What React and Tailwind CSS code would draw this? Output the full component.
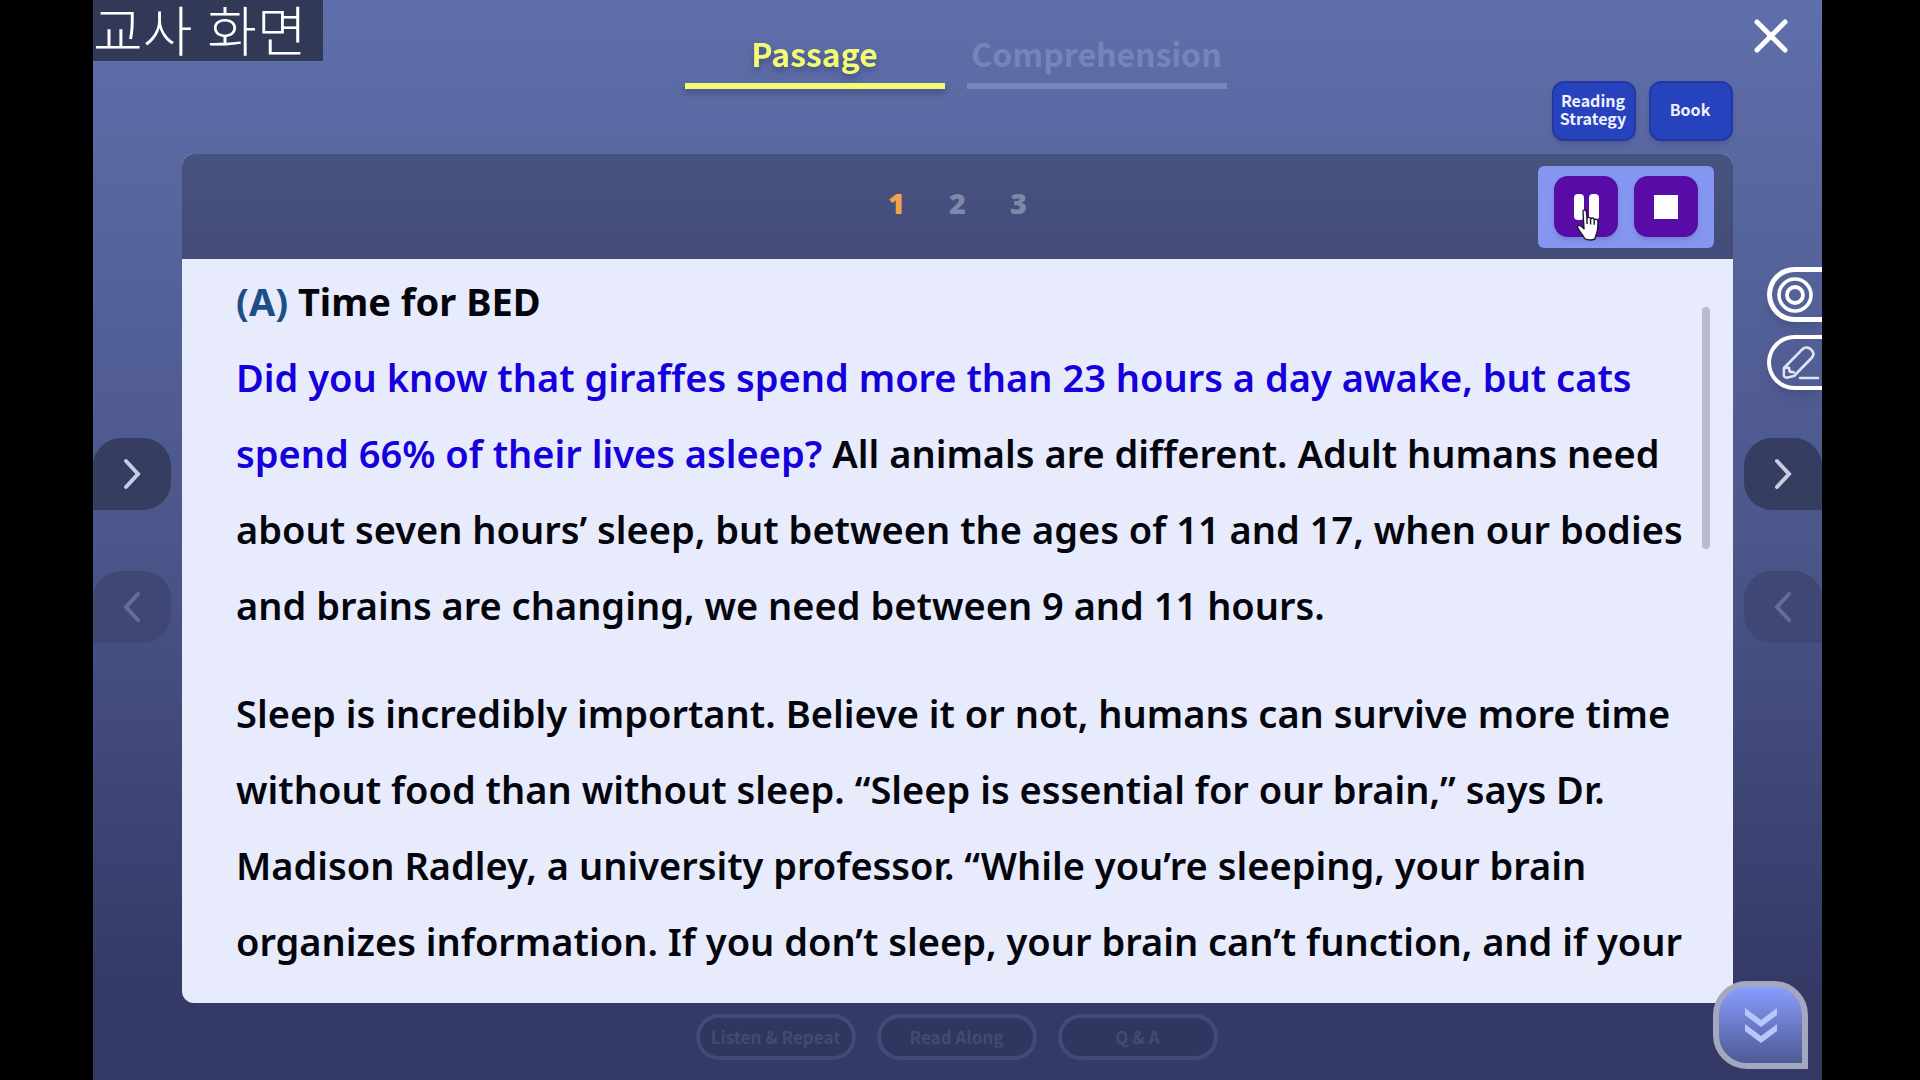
import React from "react";

const tabs = [
  { label: "Passage", active: true },
  { label: "Comprehension", active: false },
];

const activities = ["Listen & Repeat", "Read Along", "Q & A"];

function Chevron({ back }) {
  return (
    <svg viewBox="0 0 20 32" className="h-8 w-5" fill="none" stroke="currentColor" strokeWidth="4" strokeLinecap="round" strokeLinejoin="miter" aria-hidden="true">
      <path d={back ? "M16 3 L4 16 L16 29" : "M4 3 L16 16 L4 29"} />
    </svg>
  );
}

function SideButtons({ corner }) {
  return (
    <>
      <button aria-label="Next page" className={"flex h-[72px] w-[78px] items-center justify-center rounded-[28px] bg-[#353d61] text-[#c9cde0] " + corner}>
        <Chevron />
      </button>
      <button aria-label="Previous page" className={"mt-[61px] flex h-[72px] w-[78px] items-center justify-center rounded-[28px] bg-[#3f4774] text-[#666d97] " + corner}>
        <Chevron back />
      </button>
    </>
  );
}

function Header() {
  return (
    <header className="grid shrink-0 grid-cols-[1fr_auto_1fr]">
      <div />
      <nav className="flex gap-[22px] pt-7 pr-1">
        {tabs.map((t) => (
          <a
            key={t.label}
            href="#"
            className={
              "flex h-[61px] w-[260px] justify-center border-b-6 text-[32px] leading-[50px] font-bold " +
              (t.active
                ? "border-[#f1fb74] text-[#f1fb74] drop-shadow-[0_4px_3px_rgba(40,50,90,0.5)]"
                : "border-[#7a85b8] text-[#7884b8]")
            }
          >
            {t.label}
          </a>
        ))}
      </nav>
      <div className="flex flex-col items-end pt-[19px]">
        <button aria-label="Close" className="mr-[34px] text-white">
          <svg viewBox="0 0 34 34" className="block size-[34px]" stroke="currentColor" strokeWidth="5" strokeLinecap="round" aria-hidden="true">
            <path d="M3 3 L31 31 M31 3 L3 31" />
          </svg>
        </button>
        <div className="mt-7 mr-[89px] mb-[13px] flex gap-[13px] text-[16px] leading-[18px] font-bold text-[#eef1ff]">
          <button className="h-[60px] w-[84px] rounded-xl border-2 border-[#2438a4] bg-[#2742bd] pr-0.5 pb-1 shadow-md">
            Reading
            <br />
            Strategy
          </button>
          <button className="h-[60px] w-[84px] rounded-xl border-2 border-[#2438a4] bg-[#2742bd] pr-0.5 pb-1 shadow-md">Book</button>
        </div>
      </div>
    </header>
  );
}

function PlayerControls() {
  return (
    <div className="relative mr-[19px] flex h-[82px] items-center gap-4 justify-self-end rounded-md bg-[#8496ef] px-4">
      <button aria-label="Pause" className="flex h-[61px] w-16 items-center justify-center gap-[5px] rounded-[14px] bg-[#580ba6] shadow-md">
        <span className="h-[26px] w-[10px] rounded-sm bg-white" />
        <span className="h-[26px] w-[10px] rounded-sm bg-white" />
      </button>
      <button aria-label="Stop" className="flex h-[61px] w-16 items-center justify-center rounded-[14px] bg-[#580ba6] shadow-md">
        <span className="size-6 bg-white" />
      </button>
      <svg viewBox="0 0 24 32" className="absolute top-[43px] left-[38px] h-8 w-6" fill="#fff" stroke="#1c1c2c" strokeWidth="1.4" strokeLinejoin="round" aria-hidden="true">
        <path d="M7 2.6 C7 .4 10.2 .4 10.4 2.6 L11 9.6 C11.6 7.8 14.4 8 14.6 10 C15.4 8.4 18 8.8 18.2 10.8 C19.4 9.6 22 10.4 22 12.6 L21.6 20 C21.5 24 19.5 25.5 19 30 C15 31.5 11.5 31.2 8.5 29.5 C7.5 26 3 22.5 1.6 18.6 C1 16.6 3.2 15.6 4.8 17 L8 19.8 Z" />
        <path d="M11 9.6 V15 M14.6 10 V15.4 M18.2 10.8 V15.8" fill="none" />
      </svg>
    </div>
  );
}

function PassageCard() {
  return (
    <main className="flex min-w-0 flex-1 flex-col overflow-hidden rounded-xl bg-[#e7ebfb]">
      <div className="grid h-[105px] shrink-0 grid-cols-[1fr_auto_1fr] items-center bg-linear-to-b from-[#47537f] to-[#444c79]">
        <div />
        <div className="flex pb-2 font-['Open_Sans',sans-serif] text-[29px] leading-9 font-extrabold text-[#7f88a8]">
          <button className="w-[61px] text-[#f2a24f]">1</button>
          <button className="w-[61px]">2</button>
          <button className="w-[61px]">3</button>
        </div>
        <PlayerControls />
      </div>
      <div className="relative min-h-0 flex-1 overflow-hidden pr-10 pl-[54px] font-['Noto_Sans',sans-serif] text-[38px] leading-[76px] font-semibold text-[#05060d]">
        <article className="pt-1">
          <h1 className="font-bold">
            <span className="text-[#1c4f86]">(A)</span> Time for BED
          </h1>
          <p>
            <span className="text-[#1500dc]">
              Did you know that giraffes spend more than 23 hours a day awake, but cats
              <br />
              spend 66% of their lives asleep?
            </span>{" "}
            All animals are different. Adult humans need
            <br />
            about seven hours’ sleep, but between the ages of 11 and 17, when our bodies
            <br />
            and brains are changing, we need between 9 and 11 hours.
          </p>
          <p className="mt-8">
            Sleep is incredibly important. Believe it or not, humans can survive more time
            <br />
            without food than without sleep. “Sleep is essential for our brain,” says Dr.
            <br />
            Madison Radley, a university professor. “While you’re sleeping, your brain
            <br />
            organizes information. If you don’t sleep, your brain can’t function, and if your
          </p>
        </article>
        <div className="absolute top-12 right-[23px] h-[242px] w-2 rounded-full bg-[#b8bccf]" />
      </div>
    </main>
  );
}

function ToolTabs() {
  return (
    <div className="mt-[113px] mb-12 flex flex-col items-end gap-[13px] text-white">
      <button aria-label="Focus" className="flex h-[55px] w-[55px] items-center rounded-l-full border-5 border-r-0 border-white pl-[5px] shadow-lg">
        <svg viewBox="0 0 36 36" className="size-9" fill="none" stroke="currentColor" aria-hidden="true">
          <circle cx="18" cy="18" r="16" strokeWidth="3.6" />
          <circle cx="18" cy="18" r="8" strokeWidth="3.8" />
        </svg>
      </button>
      <button aria-label="Draw" className="flex h-[55px] w-[55px] items-center rounded-l-full border-4 border-r-0 border-white pl-[11px] shadow-lg">
        <svg viewBox="0 0 38 34" className="h-[34px] w-[38px]" fill="none" stroke="#dfe3f6" strokeWidth="2.6" strokeLinecap="round" strokeLinejoin="round" aria-hidden="true">
          <path d="M2 22 L20.5 3.2 C23 .8 26.4 1 29 3.4 C32 6.2 32 9.4 29.6 12 L12 30 L5.5 31.5 C3 32 1.5 30.5 1.8 28 Z" />
          <path d="M2.6 21.6 L7 21.8 L7.6 25.6 L11.8 26.2" />
          <path d="M18 32 H36" />
        </svg>
      </button>
    </div>
  );
}

export default function App() {
  return (
    <div className="h-screen bg-black pr-[98px] pl-[93px] font-['Noto_Sans_CJK_KR',sans-serif]">
      <div className="relative flex h-full flex-col overflow-hidden bg-linear-to-b from-[#5f6fab] via-[#4b568a] via-50% to-[#343966] to-92%">
        <Header />
        <div className="flex min-h-0 flex-1">
          <aside className="w-[89px] shrink-0 pt-[284px]">
            <SideButtons corner="rounded-bl-none" />
          </aside>
          <PassageCard />
          <aside className="flex w-[89px] shrink-0 flex-col items-end">
            <ToolTabs />
            <SideButtons corner="rounded-br-none" />
          </aside>
        </div>
        <footer className="flex shrink-0 justify-center gap-[21px] pt-[11px] pr-0.5 pb-5">
          {activities.map((a) => (
            <button key={a} className="h-[46px] w-[160px] rounded-full border-4 border-[#434a79] bg-[#313660] text-[17px] leading-6 font-bold whitespace-nowrap text-[#434a76]">
              {a}
            </button>
          ))}
        </footer>
        <div className="absolute top-0 left-0 h-[61px] w-[230px] bg-[#323957] font-['Liberation_Sans','Noto_Sans_CJK_KR',sans-serif] text-[54px] leading-[66px] font-light whitespace-nowrap text-white">
          교사 화면
        </div>
        <button aria-label="Show more" className="absolute right-[14px] bottom-[11px] flex h-[88px] w-[95px] items-center justify-center rounded-[34px] rounded-br-none border-6 border-[#a4a8bf] bg-linear-to-b from-[#8a9dff] to-[#4e5a94] text-[#b9c6fb]">
          <svg viewBox="0 0 32 35" className="h-[35px] w-8" fill="currentColor" aria-hidden="true">
            <path d="M0 0 L16 12 L32 0 V7 L16 19 L0 7 Z M0 16 L16 28 L32 16 V23 L16 35 L0 23 Z" />
          </svg>
        </button>
      </div>
    </div>
  );
}
